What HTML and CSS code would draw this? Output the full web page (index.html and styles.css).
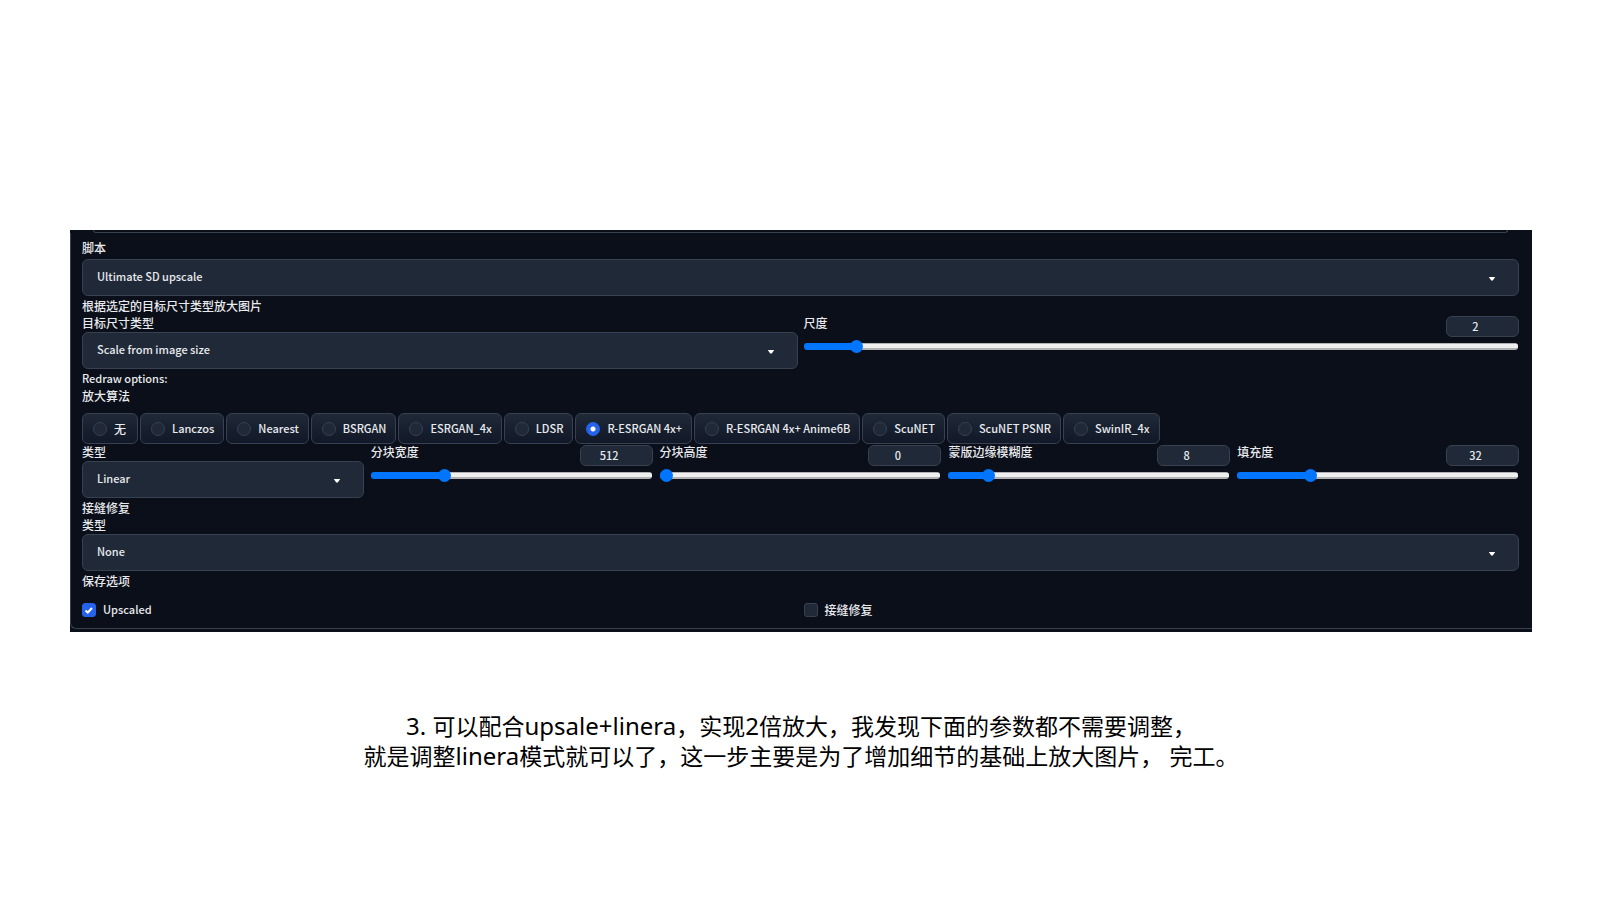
FILE: index.html
```html
<!DOCTYPE html>
<html lang="zh-CN">
<head>
<meta charset="utf-8">
<title>Ultimate SD upscale</title>
<link rel="stylesheet" href="styles.css">
</head>
<body>
<main class="page">
  <form class="panel">
    <div class="previous"></div>
    <div class="group">
      <label class="label label-first" for="script">脚本</label>
      <div class="select"><select id="script"><option>Ultimate SD upscale</option></select><svg viewBox="0 0 8 5"><path d="M0 0h8L5 4.500H3z"/></svg></div>

      <p class="label">根据选定的目标尺寸类型放大图片</p>
      <div class="halves">
        <div>
          <label class="label" for="size-type">目标尺寸类型</label>
          <div class="select"><select id="size-type"><option>Scale from image size</option></select><svg viewBox="0 0 8 5"><path d="M0 0h8L5 4.500H3z"/></svg></div>
        </div>
        <div class="slider">
          <div class="slider-head"><label class="label" for="scale">尺度</label><input class="number" type="text" value="2" aria-label="尺度"></div>
          <input class="range" id="scale" type="range" min="1" max="16" value="2" style="--v:0.0667">
        </div>
      </div>

      <p class="label latin">Redraw options:</p>
      <fieldset class="choices">
        <legend class="label">放大算法</legend>
        <div class="pills">
          <label class="pill pill-cjk"><input type="radio" name="up">无</label>
          <label class="pill"><input type="radio" name="up">Lanczos</label>
          <label class="pill"><input type="radio" name="up">Nearest</label>
          <label class="pill"><input type="radio" name="up">BSRGAN</label>
          <label class="pill"><input type="radio" name="up">ESRGAN_4x</label>
          <label class="pill"><input type="radio" name="up">LDSR</label>
          <label class="pill"><input type="radio" name="up" checked>R-ESRGAN 4x+</label>
          <label class="pill"><input type="radio" name="up">R-ESRGAN 4x+ Anime6B</label>
          <label class="pill"><input type="radio" name="up">ScuNET</label>
          <label class="pill"><input type="radio" name="up">ScuNET PSNR</label>
          <label class="pill"><input type="radio" name="up">SwinIR_4x</label>
        </div>
      </fieldset>

      <div class="fifths">
        <div>
          <label class="label" for="type">类型</label>
          <div class="select"><select id="type"><option>Linear</option></select><svg viewBox="0 0 8 5"><path d="M0 0h8L5 4.500H3z"/></svg></div>
        </div>
        <div class="slider">
          <div class="slider-head"><label class="label" for="tile-w">分块宽度</label><input class="number" type="text" value="512" aria-label="分块宽度"></div>
          <input class="range" id="tile-w" type="range" min="0" max="2048" value="512" style="--v:0.25">
        </div>
        <div class="slider">
          <div class="slider-head"><label class="label" for="tile-h">分块高度</label><input class="number" type="text" value="0" aria-label="分块高度"></div>
          <input class="range" id="tile-h" type="range" min="0" max="2048" value="0" style="--v:0">
        </div>
        <div class="slider">
          <div class="slider-head"><label class="label" for="blur">蒙版边缘模糊度</label><input class="number" type="text" value="8" aria-label="蒙版边缘模糊度"></div>
          <input class="range" id="blur" type="range" min="0" max="64" value="8" style="--v:0.125">
        </div>
        <div class="slider">
          <div class="slider-head"><label class="label" for="pad">填充度</label><input class="number" type="text" value="32" aria-label="填充度"></div>
          <input class="range" id="pad" type="range" min="0" max="128" value="32" style="--v:0.25">
        </div>
      </div>

      <p class="label">接缝修复</p>
      <label class="label" for="seam">类型</label>
      <div class="select"><select id="seam"><option>None</option></select><svg viewBox="0 0 8 5"><path d="M0 0h8L5 4.500H3z"/></svg></div>

      <p class="label">保存选项</p>
      <div class="halves saves">
        <label class="check latin"><input type="checkbox" checked><svg viewBox="0 0 14 14"><path d="M3.500 7.500l2.300 2 4.200-4.500"/></svg>Upscaled</label>
        <label class="check"><input type="checkbox">接缝修复</label>
      </div>
    </div>
  </form>
  <p class="caption"><span class="caption-latin">3. </span>可以配合<span class="caption-latin">upsale+linera</span>，实现<span class="caption-latin">2</span>倍放大，我发现下面的参数都不需要调整，<br>就是调整<span class="caption-latin">linera</span>模式就可以了，这一步主要是为了增加细节的基础上放大图片，<span class="caption-latin"> </span>完工。</p>
</main>
</body>
</html>
```
FILE: styles.css
```css
* { box-sizing: border-box; }
body { margin: 0; background: #fff; }
.page { padding: 230px 68px 0 70px; }
.panel {
  background: #0b0f19;
  color: #e8eaee;
  padding-bottom: 3px;
  font: 500 12px/15px "Noto Sans CJK SC", sans-serif;
}
.previous {
  height: 3px;
  margin: 0 24px 0 23px;
  border: 1px solid #374151;
  border-top: 0;
  border-radius: 0 0 8px 8px;
}
.group {
  padding: 7px 13px 11px 11px;
  border-left: 1px solid #374151;
  border-bottom: 1px solid #374151;
  border-bottom-left-radius: 6px;
}
.label { display: block; height: 17px; margin: 0; padding: 0; white-space: nowrap; }
.label-first { margin-bottom: 2px; }
.latin { font-size: 11px; }

.select { position: relative; margin-bottom: 2px; }
.select select {
  display: block;
  width: 100%;
  height: 37px;
  padding: 0 40px 3px 14px;
  appearance: none;
  background: #1f2937;
  border: 1px solid #374151;
  border-radius: 6px;
  color: inherit;
  font: inherit;
  font-size: 11px;
}
.select svg { position: absolute; right: 23px; top: 18px; width: 8px; height: 4px; fill: #fff; pointer-events: none; }

.halves { display: grid; grid-template-columns: 1fr 1fr; gap: 6px; }
.fifths { display: grid; grid-template-columns: repeat(5, 1fr); gap: 7px; }

.slider-head { display: flex; justify-content: space-between; }
.number {
  width: 73px;
  height: 21px;
  margin: 1px 0 0;
  padding: 0 14px 2px 0;
  background: #1f2937;
  border: 1px solid #374151;
  border-radius: 6px;
  color: inherit;
  font: inherit;
  font-size: 11px;
  text-align: center;
}
.range {
  display: block;
  width: calc(100% - 1px);
  height: 13px;
  margin: 3px 0 0;
  appearance: none;
  background: none;
}
.range::-webkit-slider-runnable-track {
  height: 7px;
  border-radius: 3px;
  background:
    linear-gradient(#0075ff, #0075ff) 0 0 / calc(6px + (100% - 13px) * var(--v)) 100% no-repeat,
    linear-gradient(#b2b2b2 1px, #efefef 1px 5px, #b2b2b2 5px);
}
.range::-webkit-slider-thumb {
  appearance: none;
  width: 13px;
  height: 13px;
  margin-top: -3px;
  border-radius: 50%;
  background: #0075ff;
}

.choices { margin: 0; padding: 0; border: 0; }
.pills { display: flex; flex-wrap: wrap; gap: 2px; padding-top: 8px; }
.pill {
  display: flex;
  align-items: center;
  gap: 7px;
  height: 31px;
  padding: 0 9px 0 10px;
  border: 1px solid #374151;
  border-radius: 6px;
  background: linear-gradient(#1f2937, #111827);
  font-size: 11px;
  white-space: nowrap;
}
.pill-cjk { padding-right: 11px; font-size: 12px; }
.pill input, .check input {
  flex: none;
  width: 14px;
  height: 14px;
  margin: 0;
  appearance: none;
  background: #1f2937;
  border: 1px solid #374151;
  border-radius: 50%;
}
.pill input:checked { border-color: #2563eb; background: radial-gradient(circle, #fff 2px, #2563eb 3px); }

.saves { padding: 12px 0 0; }
.check { position: relative; display: flex; align-items: center; gap: 7px; }
.check input { border-radius: 3px; }
.check input:checked { background: #2563eb; border-color: #2563eb; }
.check svg { position: absolute; left: 0; width: 14px; height: 14px; fill: none; stroke: #fff; stroke-width: 2; }

.caption {
  margin: 79px 0 0;
  color: #000;
  font: 400 23px/30px "Noto Sans", "Noto Sans CJK SC", sans-serif;
  text-align: center;
}
.caption-latin { font-size: 24px; }
```
